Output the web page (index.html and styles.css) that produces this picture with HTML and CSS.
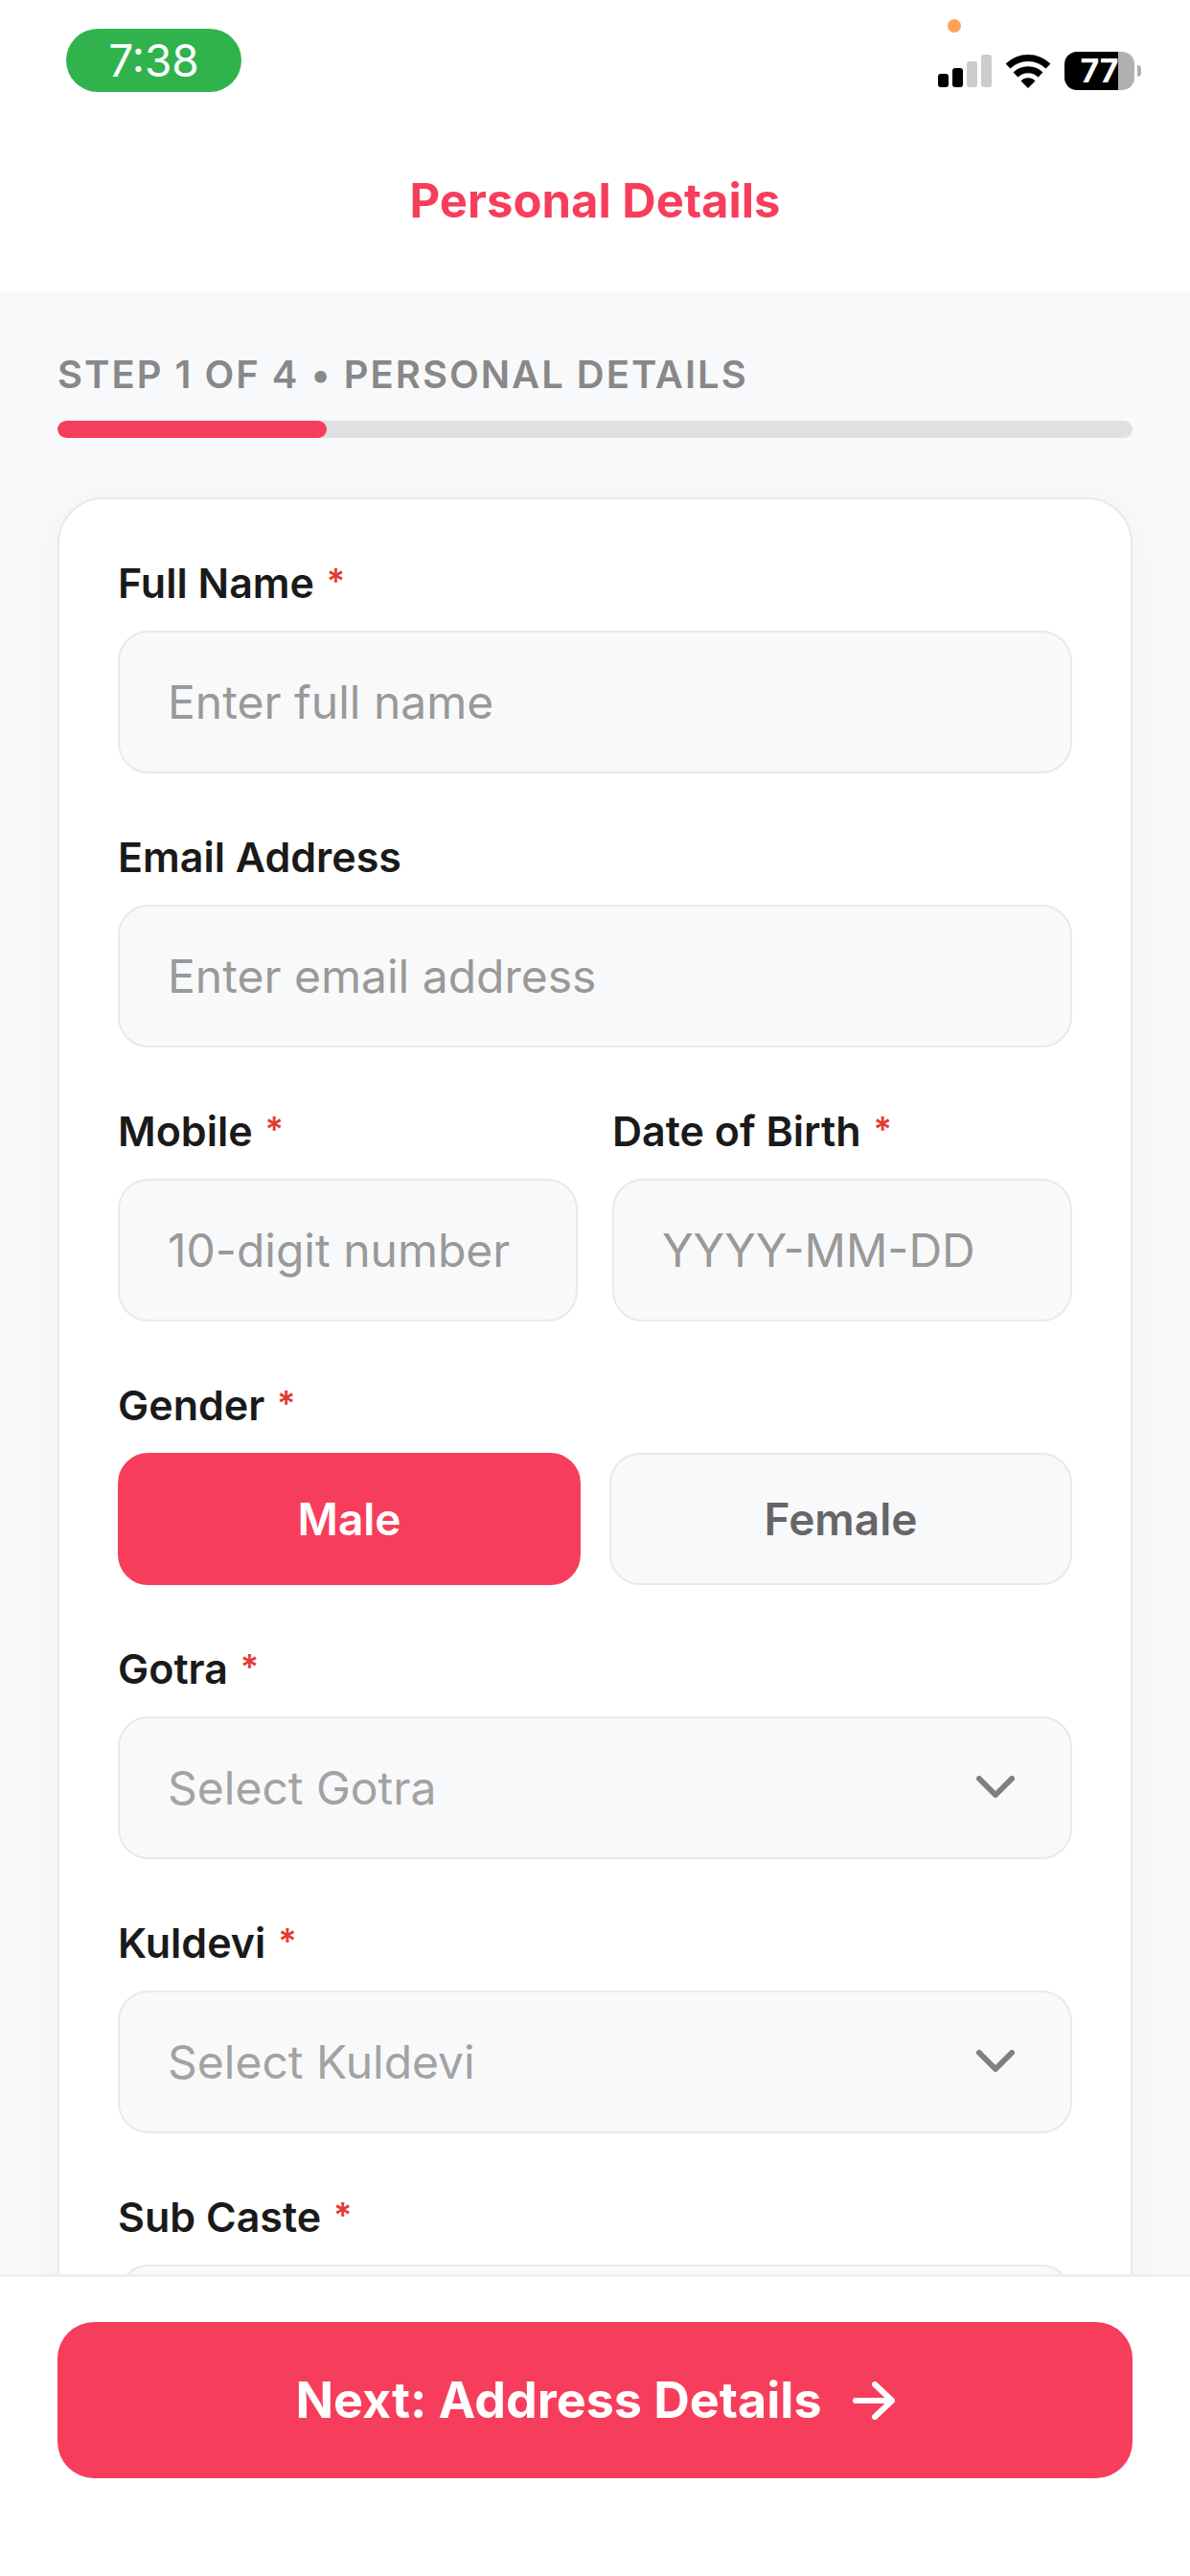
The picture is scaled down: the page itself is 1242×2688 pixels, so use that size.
FILE: index.html
```html
<!DOCTYPE html>
<html lang="en">
<head>
  <meta charset="UTF-8">
  <meta name="viewport" content="width=device-width, initial-scale=1.0">
  <title>Personal Details</title>
  <link rel="stylesheet" href="styles.css">
</head>
<body>

  <div class="status-bar">
    <span class="time">7:38</span>
    <span class="mic-dot"></span>
    <div class="status-icons">
      <svg class="signal" viewBox="0 0 56 34" aria-hidden="true">
        <rect x="0" y="20" width="11" height="14" rx="3" fill="#000"/>
        <rect x="15" y="14" width="11" height="20" rx="3" fill="#000"/>
        <rect x="30" y="7" width="11" height="27" rx="3" fill="#ccc"/>
        <rect x="45" y="0" width="11" height="34" rx="3" fill="#ccc"/>
      </svg>
      <svg class="wifi" viewBox="0 0 48 36" aria-hidden="true">
        <path d="M3 13 A30 30 0 0 1 45 13" fill="none" stroke="#000" stroke-width="7"/>
        <path d="M11 22 A18.500 18.500 0 0 1 37 22" fill="none" stroke="#000" stroke-width="7"/>
        <path d="M24 36 L16.500 28.500 A10.500 10.500 0 0 1 31.500 28.500 Z" fill="#000"/>
      </svg>
      <div class="battery">
        <span class="battery-level">77</span>
      </div>
    </div>
  </div>

  <header class="header">
    <h1>Personal Details</h1>
  </header>

  <main class="content">
    <p class="step">STEP 1 OF 4 • PERSONAL DETAILS</p>
    <div class="progress">
      <div class="progress-fill"></div>
    </div>

    <form class="card" id="details-form">
      <div class="field">
        <label for="fullName">Full Name <span class="required">*</span></label>
        <input type="text" id="fullName" placeholder="Enter full name">
      </div>

      <div class="field">
        <label for="email">Email Address</label>
        <input type="email" id="email" placeholder="Enter email address">
      </div>

      <div class="row">
        <div class="field">
          <label for="mobile">Mobile <span class="required">*</span></label>
          <input type="tel" id="mobile" placeholder="10-digit number">
        </div>
        <div class="field">
          <label for="dob">Date of Birth <span class="required">*</span></label>
          <input type="text" id="dob" placeholder="YYYY-MM-DD">
        </div>
      </div>

      <div class="field" role="group" aria-labelledby="genderLabel">
        <span class="label" id="genderLabel">Gender <span class="required">*</span></span>
        <div class="toggle">
          <button type="button" class="option selected" aria-pressed="true">Male</button>
          <button type="button" class="option" aria-pressed="false">Female</button>
        </div>
      </div>

      <div class="field">
        <label for="gotra">Gotra <span class="required">*</span></label>
        <div class="select-box">
          <select id="gotra">
            <option>Select Gotra</option>
          </select>
          <svg class="chevron" viewBox="0 0 40 24" aria-hidden="true"><path d="M3 3 L20 20 L37 3"/></svg>
        </div>
      </div>

      <div class="field">
        <label for="kuldevi">Kuldevi <span class="required">*</span></label>
        <div class="select-box">
          <select id="kuldevi">
            <option>Select Kuldevi</option>
          </select>
          <svg class="chevron" viewBox="0 0 40 24" aria-hidden="true"><path d="M3 3 L20 20 L37 3"/></svg>
        </div>
      </div>

      <div class="field">
        <label for="subCaste">Sub Caste <span class="required">*</span></label>
        <input type="text" id="subCaste">
      </div>
    </form>
  </main>

  <footer class="footer">
    <button type="submit" form="details-form" class="next">
      Next: Address Details
      <svg class="arrow" viewBox="0 0 44 40" aria-hidden="true"><path d="M3 20 H41 M23 3 L41 20 L23 37"/></svg>
    </button>
  </footer>

  <script>
    const options = document.querySelectorAll('.option');

    options.forEach(option => {
      option.addEventListener('click', () => {
        options.forEach(el => {
          el.classList.toggle('selected', el === option);
          el.setAttribute('aria-pressed', el === option);
        });
      });
    });
  </script>

</body>
</html>
```

FILE: styles.css
```css
* {
  box-sizing: border-box;
}

body {
  margin: 0;
  height: 100vh;
  display: flex;
  flex-direction: column;
  font-family: Inter, "Liberation Sans", sans-serif;
  background: #fff;
  color: #1a1a1a;
}

button,
input,
select {
  font-family: inherit;
}

/* status bar */
.status-bar {
  position: relative;
  display: flex;
  justify-content: space-between;
  align-items: flex-end;
  padding: 30px 51px 0 69px;
}

.time {
  width: 183px;
  border-radius: 33px;
  background: #30b34c;
  color: #fff;
  font-size: 46px;
  line-height: 66px;
  text-align: center;
}

.mic-dot {
  position: absolute;
  top: 20px;
  right: 239px;
  width: 14px;
  height: 14px;
  border-radius: 50%;
  background: #fda35a;
}

.status-icons {
  display: flex;
  align-items: center;
  gap: 14px;
  padding-bottom: 2px;
}

.signal {
  width: 56px;
  height: 34px;
}

.wifi {
  width: 48px;
  height: 36px;
}

.battery {
  position: relative;
  width: 73px;
  height: 40px;
  margin-right: 7px;
  border-radius: 13px;
  background: linear-gradient(to right, #000 77%, #b0b0b0 77%);
}

.battery::after {
  content: "";
  position: absolute;
  top: 14px;
  right: -7px;
  width: 4px;
  height: 12px;
  border-radius: 0 4px 4px 0;
  background: #b0b0b0;
}

.battery-level {
  display: block;
  color: #fff;
  font-size: 34px;
  font-weight: 700;
  line-height: 40px;
  text-align: center;
}

/* header */
.header {
  padding: 84px 60px 65px;
  text-align: center;
}

.header h1 {
  margin: 0;
  color: #f63e5c;
  font-size: 49px;
  font-weight: 700;
  line-height: 60px;
}

/* form */
.content {
  flex: 1;
  min-height: 0;
  padding: 62px 60px;
  overflow-y: auto;
  scrollbar-width: none;
  background: #f8f9fb;
}

.step {
  margin: 0 0 24px;
  color: #888;
  font-size: 40px;
  font-weight: 600;
  line-height: 48px;
  letter-spacing: 2px;
}

.progress {
  height: 18px;
  margin-bottom: 62px;
  border-radius: 9px;
  background: #e0e0e0;
  overflow: hidden;
}

.progress-fill {
  width: 25%;
  height: 100%;
  border-radius: 9px;
  background: #f63e5c;
}

.card {
  display: flex;
  flex-direction: column;
  gap: 61px;
  padding: 61px;
  border: 2px solid #e9e9eb;
  border-radius: 48px;
  background: #fff;
  box-shadow: 0 6px 36px rgba(0, 0, 0, 0.04);
}

.field {
  display: flex;
  flex-direction: column;
  gap: 24px;
}

.row {
  display: grid;
  grid-template-columns: 1fr 1fr;
  gap: 36px;
}

label,
.label {
  font-size: 43px;
  font-weight: 600;
  line-height: 52px;
}

.required {
  margin-left: 2px;
  color: #e53935;
  font-size: 36px;
  font-weight: 600;
  line-height: 36px;
  vertical-align: 5px;
}

input,
select {
  width: 100%;
  height: 149px;
  padding: 0 50px;
  border: 2px solid #e9e9eb;
  border-radius: 32px;
  background: #f8f9fb;
  color: #1a1a1a;
  font-size: 48px;
}

input::placeholder {
  color: #999;
  opacity: 1;
}

select {
  appearance: none;
  color: #a3a3a3;
}

.select-box {
  position: relative;
}

.chevron {
  position: absolute;
  top: 62px;
  right: 60px;
  width: 40px;
  height: 24px;
  pointer-events: none;
}

.chevron path {
  fill: none;
  stroke: #808080;
  stroke-width: 6;
  stroke-linecap: round;
  stroke-linejoin: round;
}

.toggle {
  display: grid;
  grid-template-columns: 1fr 1fr;
  gap: 30px;
}

.option {
  height: 138px;
  border: 2px solid #e9e9eb;
  border-radius: 32px;
  background: #f8f9fb;
  color: #666;
  font-size: 46px;
  font-weight: 600;
}

.option.selected {
  border-color: #f63e5c;
  background: #f63e5c;
  color: #fff;
}

/* footer */
.footer {
  padding: 47px 60px 102px;
  border-top: 3px solid #f0f0f2;
  background: #fff;
}

.next {
  display: flex;
  justify-content: center;
  align-items: center;
  gap: 32px;
  width: 100%;
  height: 163px;
  border: none;
  border-radius: 38px;
  background: #f63e5c;
  color: #fff;
  font-size: 52px;
  font-weight: 700;
}

.arrow {
  width: 44px;
  height: 40px;
}

.arrow path {
  fill: none;
  stroke: #fff;
  stroke-width: 6;
  stroke-linecap: round;
  stroke-linejoin: round;
}
```
